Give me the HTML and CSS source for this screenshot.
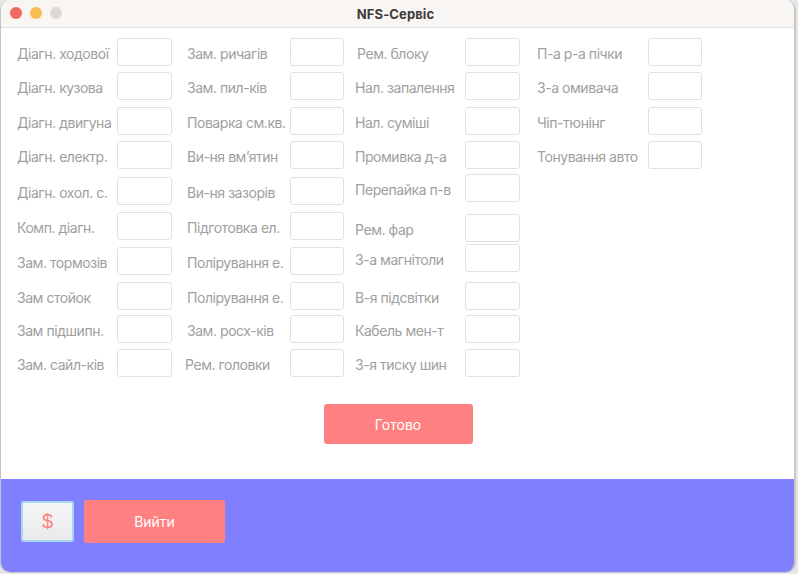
FILE: index.html
```html
<!DOCTYPE html>
<html lang="uk">
<head>
<meta charset="utf-8">
<title>NFS-Сервіс</title>
<link rel="stylesheet" href="styles.css">
</head>
<body>
<div class="window">
  <div class="titlebar">
    <div class="lights">
      <span class="light red"></span>
      <span class="light yellow"></span>
      <span class="light gray"></span>
    </div>
    <div class="title">NFS-Сервіс</div>
  </div>
  <div class="content">
    <div class="form">
      <div class="label c1">Діагн. ходової</div><div class="field"></div>
      <div class="label c2">Зам. ричагів</div><div class="field"></div>
      <div class="label c3 shift">Рем. блоку</div><div class="field"></div>
      <div class="label c4">П-а р-а пічки</div><div class="field"></div>

      <div class="label c1">Діагн. кузова</div><div class="field"></div>
      <div class="label c2">Зам. пил-ків</div><div class="field"></div>
      <div class="label c3">Нал. запалення</div><div class="field"></div>
      <div class="label c4">З-а омивача</div><div class="field"></div>

      <div class="label c1">Діагн. двигуна</div><div class="field"></div>
      <div class="label c2">Поварка см.кв.</div><div class="field"></div>
      <div class="label c3">Нал. суміші</div><div class="field"></div>
      <div class="label c4">Чіп-тюнінг</div><div class="field"></div>

      <div class="label c1">Діагн. електр.</div><div class="field"></div>
      <div class="label c2">Ви-ня вм’ятин</div><div class="field"></div>
      <div class="label c3">Промивка д-а</div><div class="field"></div>
      <div class="label c4">Тонування авто</div><div class="field"></div>

      <div class="label c1">Діагн. охол. с.</div><div class="field"></div>
      <div class="label c2">Ви-ня зазорів</div><div class="field"></div>
      <div class="label c3 up">Перепайка п-в</div><div class="field up"></div>
      <div class="empty"></div><div class="empty"></div>

      <div class="label c1">Комп. діагн.</div><div class="field"></div>
      <div class="label c2">Підготовка ел.</div><div class="field"></div>
      <div class="label c3 down">Рем. фар</div><div class="field down"></div>
      <div class="empty"></div><div class="empty"></div>

      <div class="label c1">Зам. тормозів</div><div class="field"></div>
      <div class="label c2">Полірування е.</div><div class="field"></div>
      <div class="label c3 up">З-а магнітоли</div><div class="field up"></div>
      <div class="empty"></div><div class="empty"></div>

      <div class="label c1">Зам стойок</div><div class="field"></div>
      <div class="label c2">Полірування е.</div><div class="field"></div>
      <div class="label c3">В-я підсвітки</div><div class="field"></div>
      <div class="empty"></div><div class="empty"></div>

      <div class="label c1">Зам підшипн.</div><div class="field"></div>
      <div class="label c2">Зам. росх-ків</div><div class="field"></div>
      <div class="label c3">Кабель мен-т</div><div class="field"></div>
      <div class="empty"></div><div class="empty"></div>

      <div class="label c1">Зам. сайл-ків</div><div class="field"></div>
      <div class="label c2 left">Рем. головки</div><div class="field"></div>
      <div class="label c3">З-я тиску шин</div><div class="field"></div>
      <div class="empty"></div><div class="empty"></div>
    </div>
    <div class="actions">
      <button class="btn primary done">Готово</button>
    </div>
  </div>
  <div class="footer">
    <button class="btn money">$</button>
    <button class="btn primary exit">Вийти</button>
  </div>
</div>
</body>
</html>
```

FILE: styles.css
```css
* { box-sizing: border-box; }
html, body {
  margin: 0;
  padding: 0;
  background: #e6e6e6;
}
body {
  width: 798px;
  height: 574px;
  overflow: hidden;
  font-family: Inter, "Noto Sans", "Liberation Sans", sans-serif;
}
.window {
  width: 796px;
  height: 573px;
  border-radius: 10px;
  overflow: hidden;
  border-left: 1px solid #c4c4c4;
  border-right: 2px solid #c8c8c8;
  border-bottom: 1px solid #c8c8c8;
  display: flex;
  flex-direction: column;
  background: #fff;
}
.titlebar {
  height: 28px;
  flex: none;
  background: #f9f5f2;
  border-bottom: 1px solid #e3dfdb;
  position: relative;
  display: flex;
  align-items: center;
  justify-content: center;
}
.lights {
  position: absolute;
  left: 9px;
  top: 7px;
  display: flex;
  gap: 8px;
}
.light {
  width: 12px;
  height: 12px;
  border-radius: 50%;
  display: block;
}
.light.red { background: #ee6a5f; }
.light.yellow { background: #f5be4f; }
.light.gray { background: #dcd8d5; }
.title {
  font-size: 13px;
  font-weight: 700;
  color: #3c3c3c;
  margin-left: -4px;
  letter-spacing: 0.1px;
}
.content {
  flex: none;
  height: 451px;
  background: #fff;
  padding-top: 10px;
}
.form {
  display: grid;
  grid-template-columns: 101px 55px 118px 54px 121px 55px 128px 54px;
  grid-template-rows: 34px 35px 34px 36px 35px 35px 35px 33px 34px 28px;
  padding-left: 15px;
}
.label {
  height: 28px;
  display: flex;
  align-items: center;
  font-size: 14px;
  color: #a0a0a0;
  white-space: nowrap;
  padding-top: 2px;
  letter-spacing: -0.45px;
}
.label.c1 { padding-left: 1px; }
.label.c2 { padding-left: 15px; }
.label.c3 { padding-left: 11px; }
.label.c4 { padding-left: 17px; }
.label.c3.shift { padding-left: 13px; }
.label.c2.left { padding-left: 13px; }
.field {
  height: 28px;
  border: 1px solid #e1e1e1;
  border-radius: 3px;
  background: #fff;
}
.up { margin-top: -3px; }
.down { margin-top: 2px; }
.actions {
  display: flex;
  justify-content: center;
  margin-top: 27px;
  padding-left: 1px;
}
.btn {
  font-family: inherit;
  border: none;
  cursor: pointer;
}
.primary {
  background: #ff8080;
  color: #fff;
  font-size: 14px;
  border-radius: 3px;
}
.done {
  width: 149px;
  height: 40px;
}
.footer {
  flex: 1;
  background: #8080ff;
  display: flex;
  align-items: center;
  gap: 10px;
  padding-left: 20px;
  padding-bottom: 9px;
}
.money {
  width: 53px;
  height: 41px;
  border: 2px solid #a6d8f5;
  border-radius: 3px;
  background: linear-gradient(#f7f7f7, #e9e9e9);
  color: #ff8080;
  font-size: 20px;
  font-family: "Liberation Sans", sans-serif;
}
.exit {
  width: 141px;
  height: 43px;
}
```
